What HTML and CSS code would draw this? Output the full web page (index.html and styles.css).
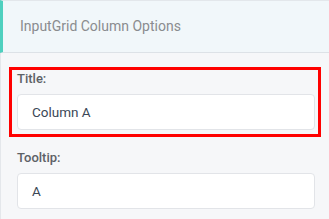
FILE: index.html
```html
<!DOCTYPE html>
<html>
<head>
<meta charset="utf-8">
<link rel="stylesheet" href="styles.css">
</head>
<body>
<div class="panel">
  <div class="panel-header">InputGrid Column Options</div>
  <div class="panel-body">
    <div class="highlight">
      <div class="field">
        <label class="field-label">Title:</label>
        <div class="field-input">Column A</div>
      </div>
    </div>
    <div class="field plain">
      <label class="field-label">Tooltip:</label>
      <div class="field-input">A</div>
    </div>
  </div>
</div>
</body>
</html>
```
FILE: styles.css
```css
html, body {
  margin: 0;
  padding: 0;
}
body {
  background: #f6f7f9;
  font-family: Roboto, "Liberation Sans", sans-serif;
  width: 329px;
  height: 219px;
  overflow: hidden;
}
.panel {
  height: 219px;
  border-left: 1px solid #e4e7eb;
  box-sizing: border-box;
}
.panel-header {
  height: 53px;
  box-sizing: border-box;
  margin-left: -1px;
  border-top: 1px solid #e3e7eb;
  border-bottom: 1px solid #dde2e7;
  border-left: 3px solid #4fd0bf;
  background: #f1f7fa;
  color: #8a8c8f;
  font-size: 14px;
  line-height: 51px;
  padding-left: 17px;
}
.panel-body {
  padding: 14px 8px 0 8px;
}
.highlight {
  border: 3px solid #ff0000;
  padding: 1px 3px 4px 5px;
}
.field {
  display: flex;
  flex-direction: column;
}
.field.plain {
  margin: 13px 6px 0 8px;
}
.field-label {
  font-size: 13px;
  line-height: 16px;
  font-weight: 500;
  color: #5d6166;
  margin-bottom: 7px;
}
.field-input {
  height: 36px;
  box-sizing: border-box;
  background: #ffffff;
  border: 1px solid #e2e4e8;
  border-radius: 4px;
  padding-left: 14px;
  font-size: 13.5px;
  line-height: 34px;
  color: #3b4756;
}
```
